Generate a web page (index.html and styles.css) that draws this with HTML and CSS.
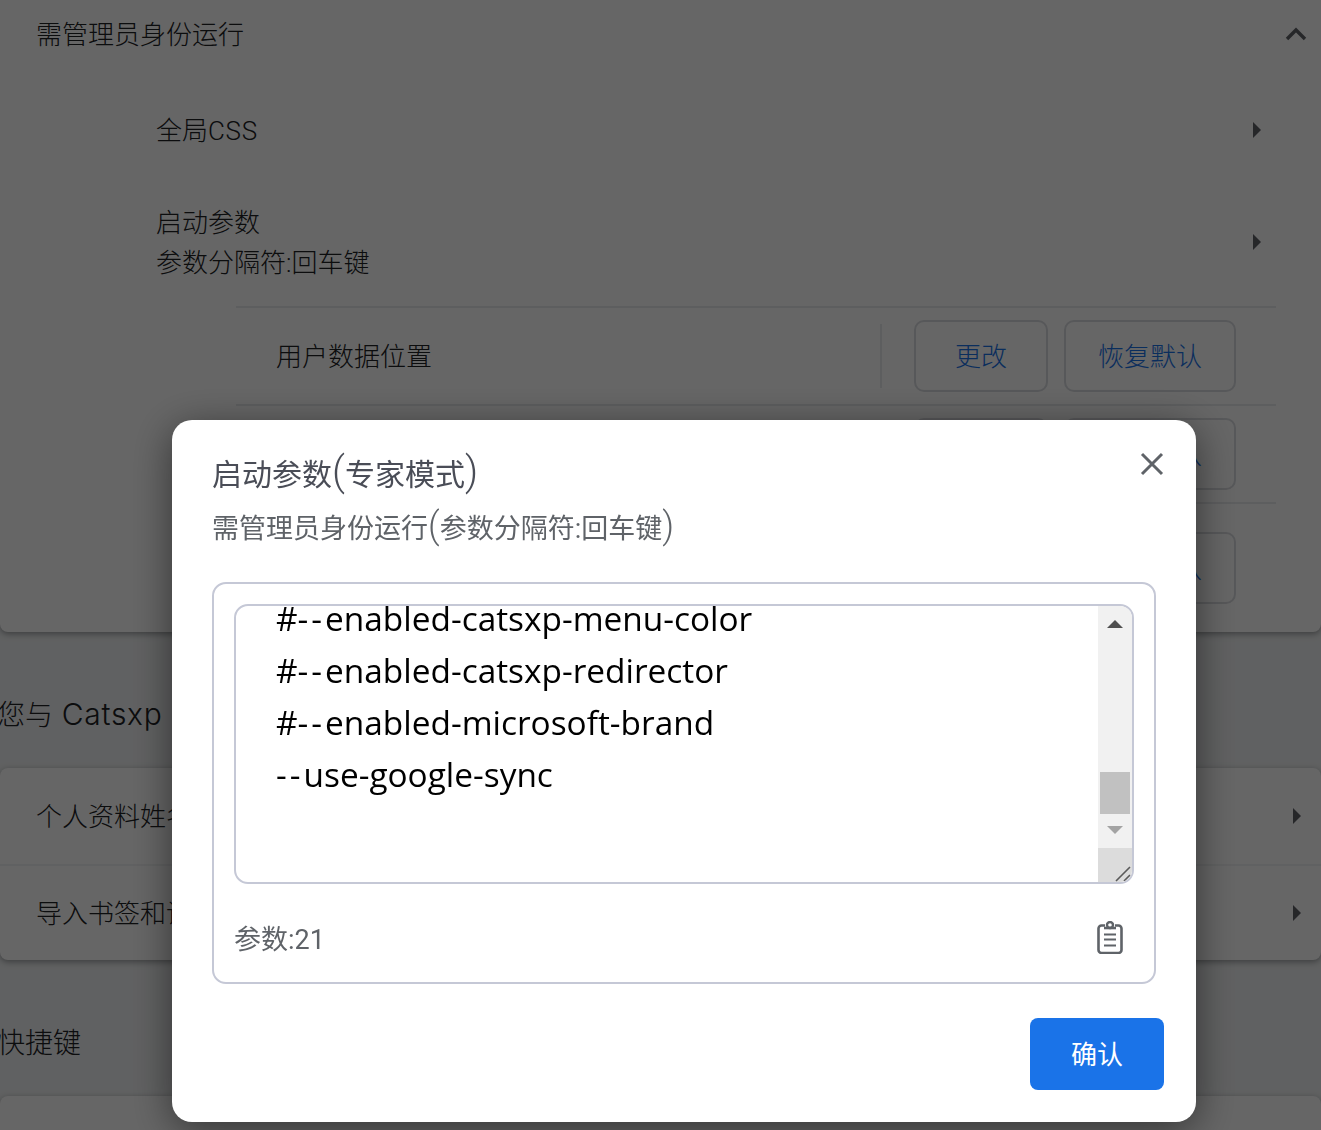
FILE: index.html
```html
<!DOCTYPE html>
<html lang="zh-CN">
<head>
<meta charset="utf-8">
<title>启动参数</title>
<link rel="stylesheet" href="styles.css">
</head>
<body>
<main class="page">
  <section class="card">
    <div class="row row-top row-head"><span class="label">需管理员身份运行</span>
      <svg class="chevron" viewBox="0 0 24 14" width="24" height="14"><path d="M3 12 12 3l9 9" fill="none" stroke="#5f6368" stroke-width="3.4"/></svg>
    </div>
    <div class="row row-sub"><span class="label">全局<span class="caps">CSS</span></span><span class="tri"></span></div>
    <div class="row row-sub row-two"><div class="label"><div>启动参数</div><div>参数分隔符:回车键</div></div><span class="tri"></span></div>
    <div class="nested">
      <div class="nrow"><span class="label grow">用户数据位置</span><span class="vline"></span><button class="btn btn-a">更改</button><button class="btn btn-b">恢复默认</button></div>
      <div class="nrow"><span class="grow"></span><button class="btn btn-a">更改</button><button class="btn btn-b">恢复默认</button></div>
      <div class="nrow nrow-tall"><span class="grow"></span><button class="btn btn-a">更改</button><button class="btn btn-b">恢复默认</button></div>
    </div>
  </section>
  <h2 class="heading">您与 <span class="latin">Catsxp</span></h2>
  <section class="card">
    <div class="row row-top"><span class="label">个人资料姓名</span><span class="tri"></span></div>
    <div class="row row-top row-line"><span class="label">导入书签和设置</span><span class="tri"></span></div>
  </section>
  <h2 class="heading">快捷键</h2>
  <section class="card card-last"></section>
</main>

<div class="overlay">
  <div class="dialog">
    <button class="close" aria-label="关闭">
      <svg viewBox="0 0 24 24" width="24" height="24"><path d="M2 2 22 22M22 2 2 22" fill="none" stroke="#5f6368" stroke-width="3"/></svg>
    </button>
    <h1 class="title">启动参数<span class="paren">(</span>专家模式<span class="paren">)</span></h1>
    <p class="subtitle">需管理员身份运行<span class="paren">(</span>参数分隔符:回车键<span class="paren">)</span></p>
    <div class="box">
      <div class="editor">
        <div class="lines">
          <div class="code">#<span class="dash">--</span>enabled-catsxp-menu-color</div>
          <div class="code">#<span class="dash">--</span>enabled-catsxp-redirector</div>
          <div class="code">#<span class="dash">--</span>enabled-microsoft-brand</div>
          <div class="code"><span class="dash">--</span>use-google-sync</div>
        </div>
        <div class="scrollbar">
          <svg class="arrow" viewBox="0 0 16 8" width="16" height="8"><path d="M0 8 8 0l8 8z" fill="#505050"/></svg>
          <div class="track"><div class="thumb"></div></div>
          <svg class="arrow" viewBox="0 0 16 8" width="16" height="8"><path d="M0 0h16L8 8z" fill="#a3a3a3"/></svg>
          <div class="resizer">
            <svg viewBox="0 0 18 16" width="18" height="16"><path d="M2 15 16 1M10 15l6-6" fill="none" stroke="#5a5a5a" stroke-width="1.6"/></svg>
          </div>
        </div>
      </div>
      <div class="foot">
        <span class="count">参数:21</span>
        <svg class="clip" viewBox="0 0 26 33" width="26" height="33"><path d="M8 4.500H4.500a3 3 0 0 0-3 3V29a3 3 0 0 0 3 3h17a3 3 0 0 0 3-3V7.500a3 3 0 0 0-3-3H18" fill="none" stroke="#5f6368" stroke-width="2.600"/><path d="M7 7h12" fill="none" stroke="#5f6368" stroke-width="2.600"/><circle cx="13" cy="4" r="3" fill="none" stroke="#5f6368" stroke-width="2.400"/><path d="M7 13.500h12M7 18.500h12M7 24.500h12" fill="none" stroke="#5f6368" stroke-width="2.200"/></svg>
      </div>
    </div>
    <div class="actions"><button class="confirm">确认</button></div>
  </div>
</div>
</body>
</html>
```

FILE: styles.css
```css
* { box-sizing: border-box; }
html, body { margin: 0; height: 1130px; overflow: hidden; }
body {
  background: #f1f3f4;
  color: #202124;
  font-family: Roboto, "Noto Sans CJK SC", sans-serif;
  font-size: 26px;
  font-weight: 300;
}
.page { margin-top: -14px; }
.card {
  background: #fff;
  border-radius: 8px;
  box-shadow: 0 2px 6px rgba(60, 64, 67, .5);
}
.card-last { height: 120px; }
.row { display: flex; align-items: center; justify-content: space-between; }
.row-top { height: 96px; padding: 0 20px 0 36px; }
.row-head { padding-right: 13px; }
.row-line { border-top: 2px solid #f1f3f4; }
.row-sub { height: 96px; padding: 0 60px 0 156px; }
.row-two { height: 128px; }
.label { line-height: 40px; padding-top: 2px; }
.caps { letter-spacing: .7px; }
.tri {
  width: 0; height: 0;
  border-left: 8px solid #5f6368;
  border-top: 8px solid transparent;
  border-bottom: 8px solid transparent;
}
.nested { margin: 0 45px 0 236px; }
.nrow {
  display: flex; align-items: center;
  height: 98px;
  padding: 0 40px;
  border-top: 2px solid #e8eaed;
}
.nrow-tall { height: 130px; }
.grow { flex: 1; }
.vline { width: 2px; height: 64px; background: #e8eaed; margin-right: 32px; }
.btn {
  height: 72px;
  border: 2px solid #dadce0;
  border-radius: 10px;
  background: #fff;
  color: #1a73e8;
  font: inherit;
  line-height: 40px;
  padding: 2px 0 0;
}
.btn-a { width: 134px; margin-right: 16px; }
.btn-b { width: 172px; }
.heading {
  margin: 0 0 0 -3px;
  padding: 65px 0 33px;
  font-size: 28px;
  line-height: 38px;
  font-weight: 300;
}
.latin { font-family: Inter, Roboto, sans-serif; font-size: 30px; line-height: 0; letter-spacing: .7px; margin-left: 2px; }

.overlay {
  position: fixed; inset: 0;
  background: rgba(0, 0, 0, .6);
  padding: 420px 125px 8px 172px;
}
.dialog {
  position: relative;
  width: 1024px; height: 702px;
  background: #fff;
  border-radius: 20px;
  padding: 32px 40px;
  box-shadow: 0 8px 40px rgba(0, 0, 0, .5);
  color: #5f6368;
}
.close {
  position: absolute; top: 32px; right: 32px;
  width: 24px; height: 24px;
  padding: 0; border: 0; background: none;
}
.title {
  margin: 0;
  font-size: 30px; line-height: 46px; font-weight: 400;
  color: #4a4d57;
}
.subtitle {
  margin: 8px 0 0;
  font-size: 27px; line-height: 46px; font-weight: 400;
  color: #5f6368;
}
.paren { font-size: 1.35em; line-height: 0; font-weight: 300; }
.box {
  width: 944px; height: 402px;
  margin-top: 30px;
  border: 2px solid #c5c8d6;
  border-radius: 14px;
  padding: 20px;
}
.editor {
  display: flex;
  height: 280px;
  border: 2px solid #c5c8d6;
  border-radius: 14px;
  overflow: hidden;
}
.lines { flex: 1; padding-left: 40px; overflow: hidden; }
.code {
  font-family: "Open Sans", sans-serif;
  font-size: 33.4px; line-height: 52px; font-weight: 400;
  color: #000;
  white-space: nowrap;
}
.dash { letter-spacing: 3px; }
.code:first-child { margin-top: -14px; }
.scrollbar {
  width: 34px;
  background: #f1f1f1;
  display: flex; flex-direction: column; align-items: center;
}
.arrow { flex: none; margin-top: 14px; }
.track { flex: 1; width: 100%; padding: 0 2px; display: flex; align-items: flex-end; }
.thumb { width: 30px; height: 42px; background: #c1c1c1; }
.scrollbar .arrow:nth-of-type(2) { margin: 12px 0 14px; }
.resizer {
  width: 100%; height: 34px;
  background: #dcdcdc;
  display: flex; align-items: flex-end; justify-content: flex-end;
}
.foot { display: flex; align-items: center; justify-content: space-between; height: 70px; padding: 16px 11px 0 0; margin-top: 10px; }
.count { font-size: 27px; font-weight: 400; color: #5f6368; }
.actions { display: flex; justify-content: flex-end; margin: 34px -8px 0 0; }
.confirm {
  width: 134px; height: 72px;
  border: 0; border-radius: 8px;
  background: #1a73e8; color: #fff;
  font: inherit; font-weight: 400;
  line-height: 40px;
  padding: 2px 0 0;
}
```
